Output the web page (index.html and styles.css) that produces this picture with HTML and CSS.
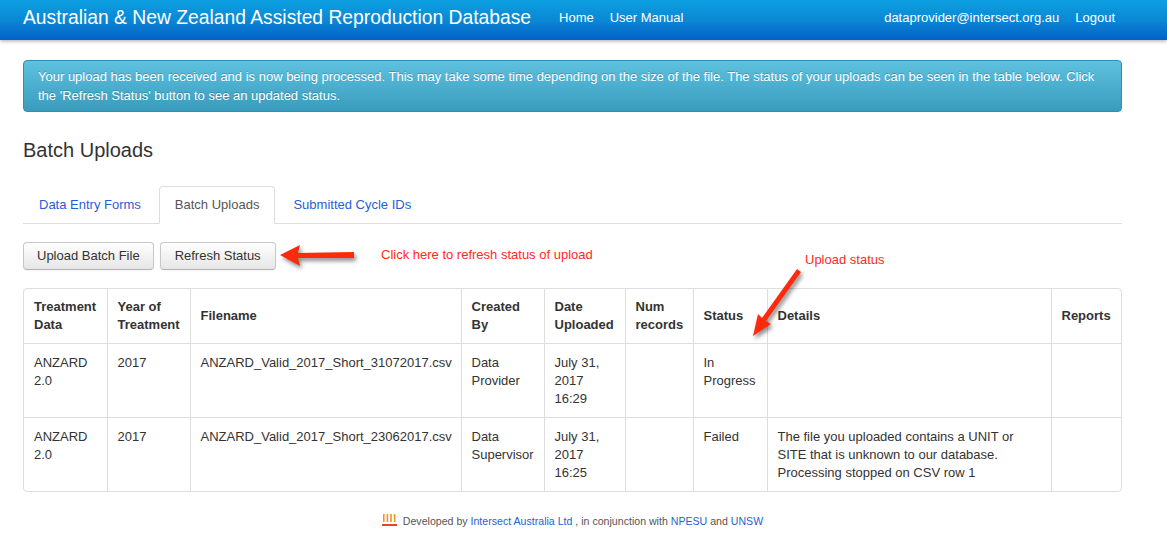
FILE: index.html
```html
<!DOCTYPE html>
<html>
<head>
<meta charset="utf-8">
<title>ANZARD Batch Uploads</title>
<link rel="stylesheet" href="styles.css">
</head>
<body>
<header class="navbar">
  <div class="nav-inner">
    <a class="brand" href="#">Australian &amp; New Zealand Assisted Reproduction Database</a>
    <nav class="nav-left">
      <a href="#">Home</a>
      <a href="#">User Manual</a>
    </nav>
    <nav class="nav-right">
      <a href="#">dataprovider@intersect.org.au</a>
      <a href="#">Logout</a>
    </nav>
  </div>
</header>

<main class="container">
  <div class="alert">Your upload has been received and is now being processed. This may take some time depending on the size of the file. The status of your uploads can be seen in the table below. Click the 'Refresh Status' button to see an updated status.</div>

  <h1 class="page-title">Batch Uploads</h1>

  <ul class="tabs">
    <li><a href="#">Data Entry Forms</a></li>
    <li class="active"><a href="#">Batch Uploads</a></li>
    <li><a href="#">Submitted Cycle IDs</a></li>
  </ul>

  <div class="toolbar">
    <button class="btn">Upload Batch File</button>
    <button class="btn">Refresh Status</button>
  </div>

  <div class="table-wrap">
    <table class="grid">
      <colgroup>
        <col class="c1"><col class="c2"><col class="c3"><col class="c4"><col class="c5"><col class="c6"><col class="c7"><col class="c8"><col class="c9">
      </colgroup>
      <thead>
        <tr>
          <th>Treatment Data</th>
          <th>Year of Treatment</th>
          <th>Filename</th>
          <th>Created By</th>
          <th>Date Uploaded</th>
          <th>Num records</th>
          <th>Status</th>
          <th>Details</th>
          <th>Reports</th>
        </tr>
      </thead>
      <tbody>
        <tr>
          <td>ANZARD 2.0</td>
          <td>2017</td>
          <td>ANZARD_Valid_2017_Short_31072017.csv</td>
          <td>Data Provider</td>
          <td>July 31, 2017 16:29</td>
          <td></td>
          <td>In Progress</td>
          <td></td>
          <td></td>
        </tr>
        <tr>
          <td>ANZARD 2.0</td>
          <td>2017</td>
          <td>ANZARD_Valid_2017_Short_23062017.csv</td>
          <td>Data Supervisor</td>
          <td>July 31, 2017 16:25</td>
          <td></td>
          <td>Failed</td>
          <td>The file you uploaded contains a UNIT or SITE that is unknown to our database. Processing stopped on CSV row 1</td>
          <td></td>
        </tr>
      </tbody>
    </table>
  </div>

  <footer class="footer">
    <svg class="logo" width="15" height="12" viewBox="0 0 15 12">
      <rect x="1" y="0" width="1.6" height="8" fill="#f7941e"/>
      <rect x="4.6" y="0" width="1.6" height="8" fill="#f7941e"/>
      <rect x="8.2" y="0" width="1.6" height="8" fill="#f7941e"/>
      <rect x="11.8" y="0" width="1.6" height="8" fill="#f7941e"/>
      <rect x="0" y="10" width="15" height="2" fill="#e8412c"/>
    </svg>
    <span>Developed by <a href="#">Intersect Australia Ltd</a> , in conjunction with <a href="#">NPESU</a> and <a href="#">UNSW</a></span>
  </footer>
</main>

<div class="note note-refresh">Click here to refresh status of upload</div>
<div class="note note-status">Upload status</div>

<svg class="arrow arrow-left" width="84" height="30" viewBox="0 0 84 30">
  <polygon points="2,14 22,4 20,12 76,11 76,17 20,17 22,25" fill="#ff2a0d"/>
</svg>
<svg class="arrow arrow-diag" width="60" height="76" viewBox="0 0 60 76">
  <polygon points="52,3 56,6 21,55 26,58 8,70 13,48 17,52" fill="#ff2a0d"/>
</svg>
</body>
</html>
```

FILE: styles.css
```css
* { box-sizing: border-box; }

html, body {
  margin: 0;
  padding: 0;
}

body {
  font-family: "Liberation Sans", Arial, Helvetica, sans-serif;
  font-size: 13px;
  line-height: 18px;
  color: #333;
  background: #fff;
  position: relative;
  min-height: 552px;
}

a { text-decoration: none; }

.navbar {
  height: 40px;
  background: linear-gradient(to bottom, #0ca0e0 0%, #0a88d6 50%, #0561c6 100%);
  box-shadow: 0 1px 4px rgba(0, 0, 0, 0.35);
  position: relative;
  z-index: 2;
}

.nav-inner {
  width: 1099px;
  margin-left: 23px;
  display: flex;
  align-items: flex-start;
  height: 40px;
}

.brand {
  color: #fff;
  font-size: 19.3px;
  line-height: 24px;
  padding-top: 6px;
  margin-right: 20px;
}

.nav-left, .nav-right {
  display: flex;
}

.nav-right { margin-left: auto; }

.nav-left a, .nav-right a {
  color: #fff;
  font-size: 13px;
  line-height: 18px;
  padding: 9px 8px 0;
}

.nav-right a:last-child { padding-right: 7px; }

.container {
  width: 1099px;
  margin-left: 23px;
  padding-top: 20px;
}

.alert {
  background: linear-gradient(to bottom, #5dc1e0 0%, #3a9cbd 100%);
  border: 1px solid #2f8eac;
  border-radius: 4px;
  color: #fff;
  padding: 6px 14px 6px 14px;
  line-height: 19px;
  text-shadow: 0 -1px 0 rgba(0, 0, 0, 0.2);
  font-weight: normal;
}

.page-title {
  font-size: 20px;
  font-weight: normal;
  line-height: 24px;
  margin: 26px 0 0;
  color: #333;
}

.tabs {
  list-style: none;
  margin: 24px 0 0;
  padding: 0;
  display: flex;
  border-bottom: 1px solid #ddd;
}

.tabs li {
  margin-right: 2px;
  margin-bottom: -1px;
}

.tabs a {
  display: block;
  padding: 9px 15px;
  line-height: 18px;
  border: 1px solid transparent;
  border-radius: 4px 4px 0 0;
  color: #1f5fd2;
}

.tabs li.active a {
  color: #555;
  background: #fff;
  border-color: #ddd #ddd transparent;
}

.toolbar {
  display: flex;
  gap: 6px;
  margin-top: 18px;
}

.btn {
  font-family: inherit;
  font-size: 13px;
  line-height: 18px;
  color: #333;
  padding: 4px 14px 4px 14px;
  border: 1px solid #c8c8c8;
  border-bottom-color: #b3b3b3;
  border-radius: 4px;
  background: linear-gradient(to bottom, #ffffff 0%, #e6e6e6 100%);
  box-shadow: inset 0 1px 0 rgba(255,255,255,.2), 0 1px 2px rgba(0,0,0,.05);
}

.btn:first-child { padding: 4px 13px; }

.table-wrap {
  margin-top: 18px;
  border: 1px solid #ddd;
  border-radius: 4px;
  overflow: hidden;
}

.grid {
  width: 100%;
  border-collapse: collapse;
  table-layout: fixed;
}

.c1 { width: 83px; }
.c2 { width: 83px; }
.c3 { width: 271px; }
.c4 { width: 83px; }
.c5 { width: 81px; }
.c6 { width: 68px; }
.c7 { width: 74px; }
.c8 { width: 284px; }
.c9 { width: 70px; }

.grid th, .grid td {
  padding: 10px 10px 9px;
  text-align: left;
  vertical-align: top;
  line-height: 18px;
  border-left: 1px solid #ddd;
  border-top: 1px solid #ddd;
}

.grid th:first-child, .grid td:first-child { border-left: none; }
.grid thead th { border-top: none; vertical-align: middle; font-weight: bold; padding: 9px 10px 9px; }

.footer {
  display: flex;
  justify-content: center;
  align-items: center;
  gap: 6px;
  margin-top: 20px;
  font-size: 10.6px;
  color: #555;
}

.footer a { color: #1f5fd2; }

.logo { display: block; margin-top: -2px; }

.note {
  position: absolute;
  color: #ff2a1a;
  font-size: 13px;
  line-height: 18px;
}

.note-refresh { left: 381px; top: 246px; }
.note-status { left: 805px; top: 251px; }

.arrow {
  position: absolute;
  filter: drop-shadow(2px 3px 2px rgba(0, 0, 0, 0.45));
}

.arrow-left { left: 278px; top: 241px; }
.arrow-diag { left: 745px; top: 266px; }
```
